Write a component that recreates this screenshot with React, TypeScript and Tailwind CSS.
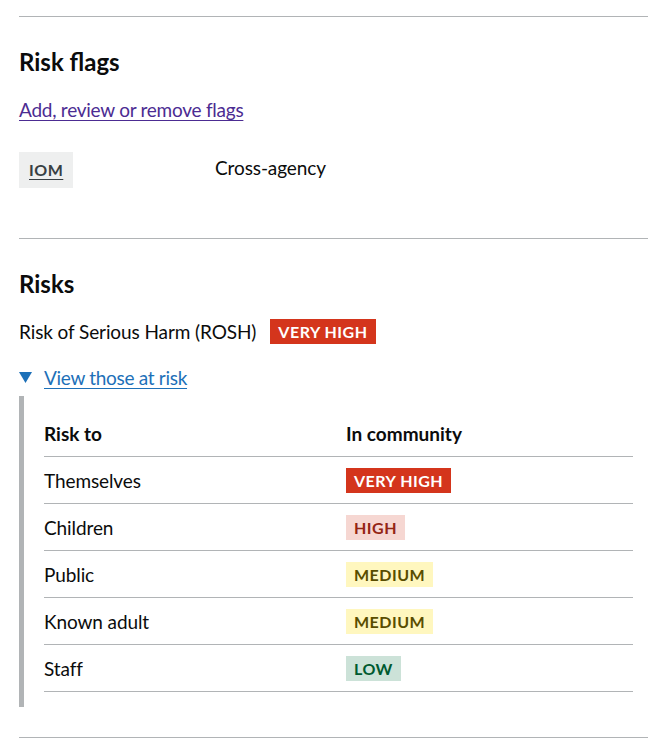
import React from "react";

const font = { fontFamily: "Lato, 'Liberation Sans', sans-serif" };

function Tag({ label, cls }: { label: string; cls: string }) {
  return (
    <span
      className={`inline-flex h-[25px] items-center px-[8px] text-[16px] font-bold uppercase leading-none tracking-[0.5px] ${cls}`}
    >
      {label}
    </span>
  );
}

const rows: { who: string; label: string; cls: string }[] = [
  { who: "Themselves", label: "Very high", cls: "bg-[#d4351c] text-white" },
  { who: "Children", label: "High", cls: "bg-[#f6d7d2] text-[#942514]" },
  { who: "Public", label: "Medium", cls: "bg-[#fff7bf] text-[#594d00]" },
  { who: "Known adult", label: "Medium", cls: "bg-[#fff7bf] text-[#594d00]" },
  { who: "Staff", label: "Low", cls: "bg-[#cce2d8] text-[#005a30]" },
];

export default function App() {
  return (
    <div className="min-h-[751px] bg-white pt-[16px] text-[#0b0c0c]" style={font}>
      <div className="ml-[19px] w-[629px]">
        <section className="border-t border-[#b1b4b6] pt-[30px] pb-[50px]">
          <h2 className="text-[24px] font-bold leading-[30px]">Risk flags</h2>
          <a
            href="#"
            className="mt-[20px] block w-fit text-[19px] leading-[25px] tracking-[-0.25px] text-[#4c2c92] underline decoration-1 underline-offset-[3px]"
          >
            Add, review or remove flags
          </a>
          <div className="mt-[30px] flex items-start">
            <div className="w-[196px]">
              <span className="inline-flex h-[36px] items-center bg-[#eeefef] px-[10px] text-[16px] font-bold tracking-[0.5px] text-[#383f43] underline decoration-1 underline-offset-[3px]">
                IOM
              </span>
            </div>
            <span className="mt-[3px] text-[19px] leading-[25px] tracking-[-0.1px]">Cross-agency</span>
          </div>
        </section>

        <section className="border-t border-[#b1b4b6] pt-[30px] pb-[30px]">
          <h2 className="text-[24px] font-bold leading-[30px]">Risks</h2>
          <div className="mt-[20px] flex items-center text-[19px] leading-[25px] tracking-[-0.1px]">
            <span className="mr-[14px]">Risk of Serious Harm (ROSH)</span>
            <Tag label="Very high" cls="bg-[#d4351c] text-white" />
          </div>
          <div className="mt-[21px] flex items-center">
            <svg width="13" height="11" viewBox="0 0 13 11" className="mr-[12px] shrink-0">
              <polygon points="0,0 13,0 6.5,11" fill="#1d70b8" />
            </svg>
            <a
              href="#"
              className="text-[19px] leading-[25px] tracking-[-0.3px] text-[#1d70b8] underline decoration-1 underline-offset-[3px]"
            >
              View those at risk
            </a>
          </div>
          <div className="mt-[6px] border-l-[5px] border-[#b1b4b6] pb-[15px] pl-[20px] pr-[15px] pt-[15px]">
            <div className="flex h-[46px] items-center border-b border-[#b1b4b6] text-[19px] font-bold leading-[25px]">
              <div className="w-[302px]">Risk to</div>
              <div>In community</div>
            </div>
            {rows.map((r) => (
              <div
                key={r.who}
                className="flex h-[47px] items-center border-b border-[#b1b4b6] text-[19px] leading-[25px] tracking-[-0.1px]"
              >
                <div className="w-[302px]">{r.who}</div>
                <div>
                  <Tag label={r.label} cls={r.cls} />
                </div>
              </div>
            ))}
          </div>
        </section>
        <div className="border-t border-[#b1b4b6]" />
      </div>
    </div>
  );
}
